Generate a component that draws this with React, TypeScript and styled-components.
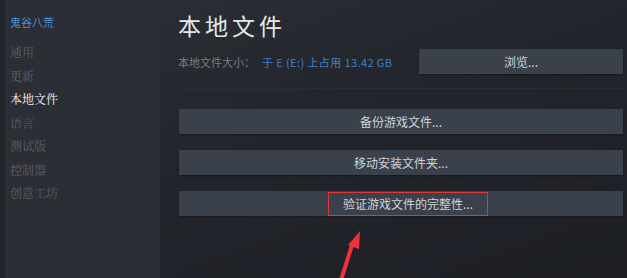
import React from 'react';
import styled, { createGlobalStyle } from 'styled-components';

const Global = createGlobalStyle`
  html, body {
    margin: 0;
    padding: 0;
    background: #1f2127;
  }
  body {
    font-family: "Noto Sans CJK SC", "Noto Sans", sans-serif;
  }
`;

const Shell = styled.div`
  display: flex;
  width: 627px;
  height: 278px;
  overflow: hidden;
`;

const Sidebar = styled.nav`
  width: 150px;
  flex-shrink: 0;
  border-left: 5px solid #22252a;
  background: #2b2e34;
  display: flex;
  flex-direction: column;
  padding: 13px 0 0 5px;
  box-sizing: content-box;
`;

const GameName = styled.div`
  color: #4a8fd9;
  font-size: 11px;
  line-height: 18px;
  margin-bottom: 9px;
`;

const NavItem = styled.div<{ active?: boolean }>`
  color: ${p => (p.active ? '#f2f2f2' : '#5c6068')};
  font-family: "Noto Serif CJK SC", "Noto Sans CJK SC", serif;
  font-size: 12px;
  line-height: 23.5px;
`;

const Main = styled.main`
  position: relative;
  flex: 1;
  background: linear-gradient(160deg, #2a2d34 0%, #22252b 40%, #1d1f25 100%);
  padding: 10px 4px 0 18px;
  display: flex;
  flex-direction: column;
`;

const Title = styled.h1`
  margin: 0;
  color: #e6e8ea;
  font-size: 23px;
  font-weight: 400;
  letter-spacing: 4px;
  line-height: 30px;
`;

const SizeRow = styled.div`
  display: flex;
  align-items: center;
  margin-top: 9px;
  height: 25px;
  padding-bottom: 14px;
  border-bottom: 1px solid #2a2d33;
`;

const SizeLabel = styled.span`
  color: #7a7e86;
  font-size: 11px;
  width: 84px;
`;

const SizeValue = styled.span`
  color: #3f7fd0;
  font-size: 11px;
  letter-spacing: 0.4px;
  flex: 1;
`;

const Button = styled.div<{ wide?: boolean }>`
  display: flex;
  align-items: center;
  justify-content: center;
  height: 25px;
  width: ${p => (p.wide ? 'auto' : '204px')};
  background: #3b414b;
  color: #d0d3d8;
  font-size: 12px;
  box-shadow: 0 1px 2px rgba(0, 0, 0, 0.35);
`;

const Actions = styled.div`
  display: flex;
  flex-direction: column;
  gap: 16px;
  margin-top: 20px;
  padding-left: 1px;
`;

const Highlight = styled.span`
  display: flex;
  align-items: center;
  height: 22px;
  margin-left: 14px;
  padding: 0 14px;
  border: 1px solid #e0353b;
`;

const Arrow = styled.svg`
  position: absolute;
  left: 176px;
  top: 228px;
`;

export default function App() {
  const items = ['通用', '更新', '本地文件', '语言', '测试版', '控制器', '创意工坊'];
  return (
    <>
      <Global />
      <Shell>
        <Sidebar>
          <GameName>鬼谷八荒</GameName>
          {items.map(i => (
            <NavItem key={i} active={i === '本地文件'}>
              {i}
            </NavItem>
          ))}
        </Sidebar>
        <Main>
          <Title>本地文件</Title>
          <SizeRow>
            <SizeLabel>本地文件大小：</SizeLabel>
            <SizeValue>于 E (E:) 上占用 13.42 GB</SizeValue>
            <Button>浏览...</Button>
          </SizeRow>
          <Actions>
            <Button wide>备份游戏文件...</Button>
            <Button wide>移动安装文件夹...</Button>
            <Button wide>
              <Highlight>验证游戏文件的完整性...</Highlight>
            </Button>
          </Actions>
          <Arrow width="30" height="52" viewBox="0 0 30 52">
            <path d="M5 52 L17 14" stroke="#f0303a" strokeWidth="4" fill="none" />
            <path d="M24 3 L12 17 L23 21 Z" fill="#f0303a" />
          </Arrow>
        </Main>
      </Shell>
    </>
  );
}
